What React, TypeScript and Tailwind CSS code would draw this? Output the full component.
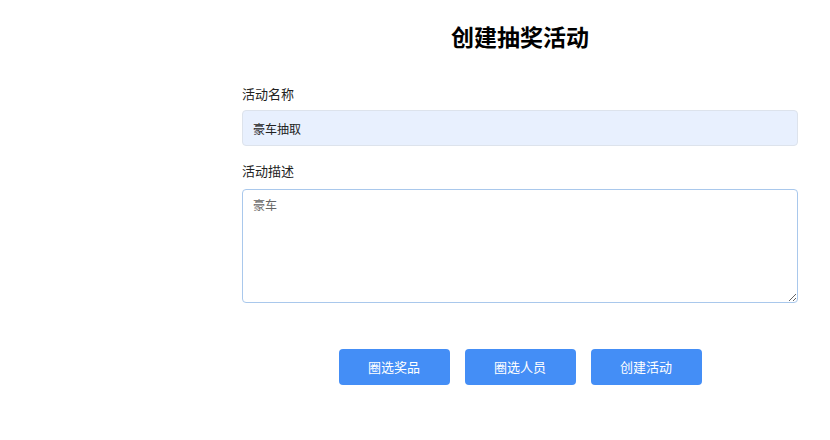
import React, { useEffect, useRef } from "react";

export default function App() {
  const taRef = useRef<HTMLTextAreaElement>(null);
  useEffect(() => {
    const t = taRef.current;
    if (t) {
      t.focus();
      t.setSelectionRange(2, 2);
    }
  }, []);

  return (
    <div
      className="flex w-[830px] h-[440px] bg-white text-[#222]"
      style={{ fontFamily: '"Noto Sans CJK SC", "Noto Sans", sans-serif' }}
    >
      <div className="w-[210px] shrink-0" />
      <div className="flex-1 px-8 flex flex-col">
        <h1 className="mt-[20px] h-[32px] leading-[32px] text-[23px] font-bold text-center text-black">
          创建抽奖活动
        </h1>
        <label className="mt-[32px] h-[20px] leading-[20px] text-[13px] text-[#222]">活动名称</label>
        <input
          className="mt-[6px] h-[36px] w-full rounded-[4px] border border-[#dde3ec] bg-[#e8f0fe] px-[10px] text-[12px] text-[#222] outline-none"
          defaultValue="豪车抽取"
        />
        <label className="mt-[15px] h-[20px] leading-[20px] text-[13px] text-[#222]">活动描述</label>
        <textarea
          ref={taRef}
          className="mt-[8px] h-[114px] w-full rounded-[4px] border border-[#a9c8ec] bg-white px-[10px] py-[6px] text-[12px] leading-[18px] text-[#666] caret-[#333] outline-none"
          defaultValue="豪车"
        />
        <div className="mt-[46px] flex justify-center gap-[15px]">
          <button className="h-[36px] w-[111px] rounded-[4px] bg-[#448ef6] text-[13px] text-white">圈选奖品</button>
          <button className="h-[36px] w-[111px] rounded-[4px] bg-[#448ef6] text-[13px] text-white">圈选人员</button>
          <button className="h-[36px] w-[111px] rounded-[4px] bg-[#448ef6] text-[13px] text-white">创建活动</button>
        </div>
      </div>
    </div>
  );
}
